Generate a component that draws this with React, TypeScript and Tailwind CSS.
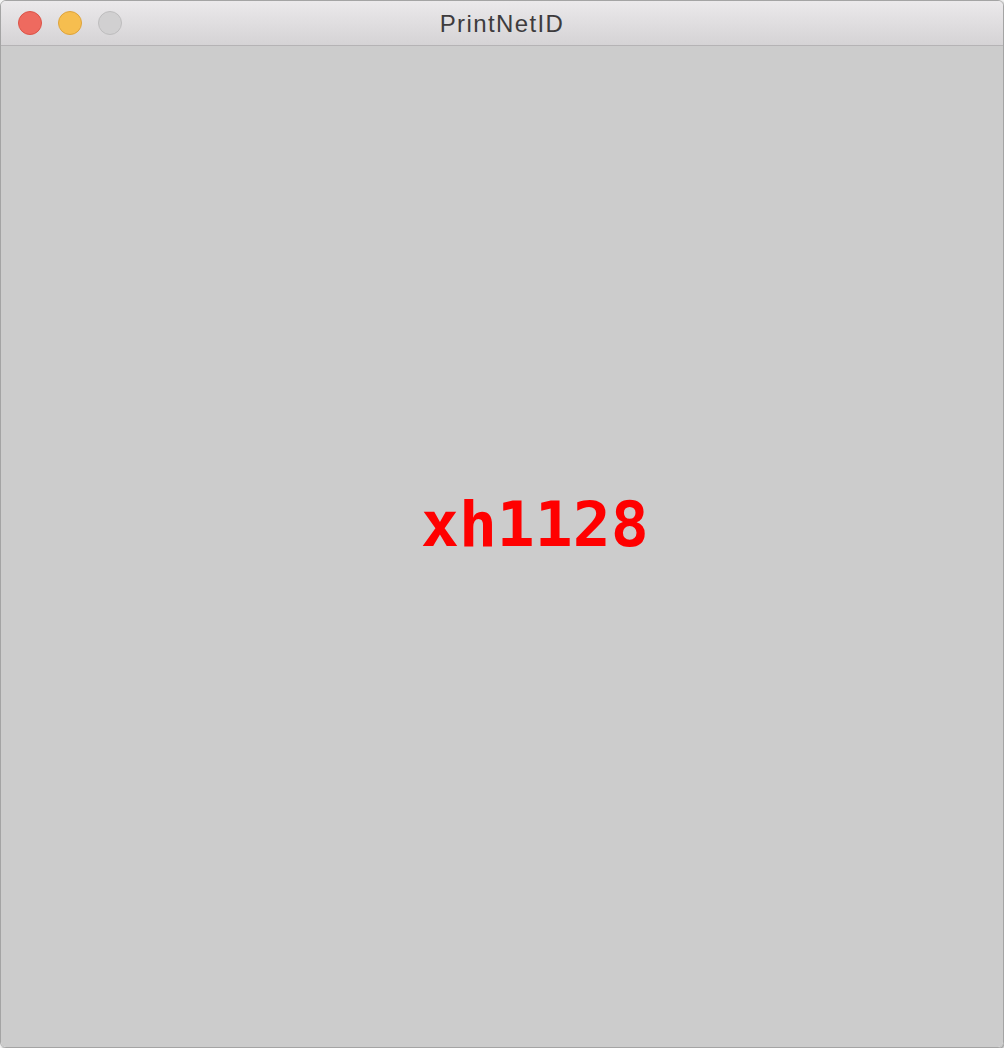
export default function App() {
  return (
    <div className="h-[1048px] w-[1004px] bg-[#f4f4f4]">
      <div className="flex h-[1048px] w-[1004px] flex-col overflow-hidden rounded-t-[6px] rounded-b-[6px] border border-[#a4a4a4] shadow-[1px_1px_2px_rgba(0,0,0,0.4)]">
        <div className="relative flex h-[45px] shrink-0 items-center border-b border-[#b5b3b5] bg-gradient-to-b from-[#ebe9eb] to-[#d5d3d5]">
          <div className="flex items-center gap-[16px] pl-[17px]">
            <span className="h-[24px] w-[24px] rounded-full border border-[#dc5347] bg-[#ee6a5f]" />
            <span className="h-[24px] w-[24px] rounded-full border border-[#dea33b] bg-[#f6be4f]" />
            <span className="h-[24px] w-[24px] rounded-full border border-[#bebdbe] bg-[#d1d0d1]" />
          </div>
          <div className="absolute inset-x-0 top-0 flex h-[45px] items-center justify-center">
            <span className="font-['Liberation_Sans',Arial,sans-serif] text-[24px] tracking-[1.4px] text-[#3d3b3d]">
              PrintNetID
            </span>
          </div>
        </div>
        <div className="flex-1 bg-[#cccccc] pl-[420px] pt-[447px]">
          <div className="font-['DejaVu_Sans_Mono',monospace] text-[63px] font-bold leading-none text-[#ff0000]">
            xh1128
          </div>
        </div>
      </div>
    </div>
  );
}
